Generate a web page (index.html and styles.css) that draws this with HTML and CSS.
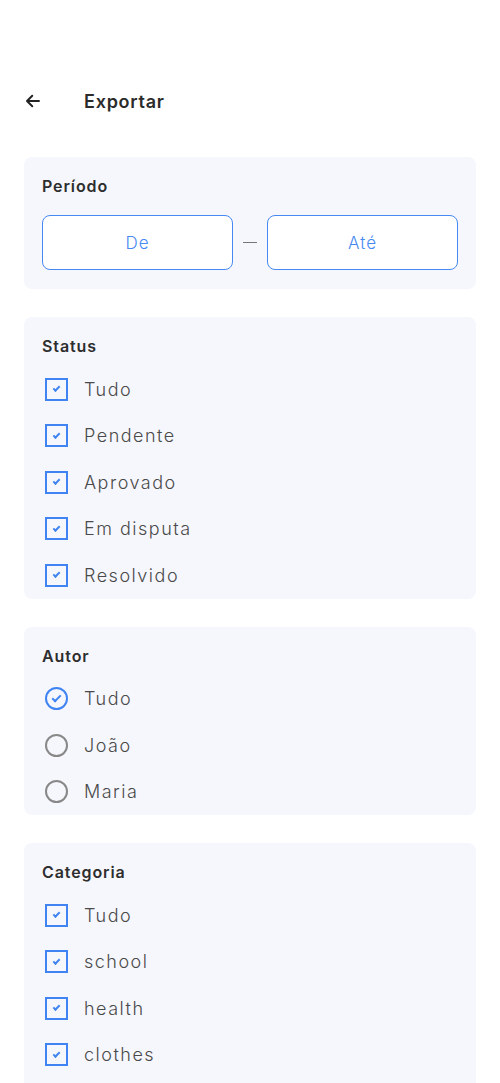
FILE: index.html
```html
<!DOCTYPE html>
<html lang="pt">

<head>
    <meta charset="UTF-8">
    <meta name="viewport" content="width=device-width, initial-scale=1.0">
    <title>Exportar</title>
    <link rel="stylesheet" href="styles.css">
</head>

<body>
    <div class="page">
        <!-- cabeçalho -->
        <header class="top-bar">
            <button class="back-btn" aria-label="Voltar">
                <svg width="18" height="18" viewBox="0 0 24 24">
                    <path d="M20 12H5M11 5l-7 7 7 7" fill="none" stroke="#222" stroke-width="2.6" stroke-linecap="round" stroke-linejoin="round"/>
                </svg>
            </button>
            <h1 class="top-title">Exportar</h1>
        </header>

        <!-- período -->
        <section class="card">
            <h2 class="card-title">Período</h2>
            <div class="period-row">
                <button class="date-btn">De</button>
                <span class="period-dash"></span>
                <button class="date-btn">Até</button>
            </div>
        </section>

        <!-- status -->
        <section class="card">
            <h2 class="card-title">Status</h2>
            <ul class="option-list">
                <li class="option"><span class="check-box"></span>Tudo</li>
                <li class="option"><span class="check-box"></span>Pendente</li>
                <li class="option"><span class="check-box"></span>Aprovado</li>
                <li class="option"><span class="check-box"></span>Em disputa</li>
                <li class="option"><span class="check-box"></span>Resolvido</li>
            </ul>
        </section>

        <!-- autor -->
        <section class="card">
            <h2 class="card-title">Autor</h2>
            <ul class="option-list">
                <li class="option"><span class="radio selected"></span>Tudo</li>
                <li class="option"><span class="radio"></span>João</li>
                <li class="option"><span class="radio"></span>Maria</li>
            </ul>
        </section>

        <!-- categoria -->
        <section class="card card-last">
            <h2 class="card-title">Categoria</h2>
            <ul class="option-list">
                <li class="option"><span class="check-box"></span>Tudo</li>
                <li class="option"><span class="check-box"></span>school</li>
                <li class="option"><span class="check-box"></span>health</li>
                <li class="option"><span class="check-box"></span>clothes</li>
            </ul>
        </section>
    </div>
</body>

</html>
```

FILE: styles.css
```css
/* global */

*,
::after,
::before {
    margin: 0;
    padding: 0;
    box-sizing: border-box;
}

body {
    background-color: #fff;
    font-family: Inter, "Open Sans", sans-serif;
    color: #333;
}

.page {
    padding: 86px 24px 28px;
    display: flex;
    flex-direction: column;
    gap: 28px;
}

/* header */

.top-bar {
    display: flex;
    align-items: center;
    height: 30px;
    margin-bottom: 13px;
}

.back-btn {
    width: 60px;
    display: flex;
    align-items: center;
    border: none;
    background: none;
    padding-left: 0;
}

.top-title {
    font-size: 18px;
    font-weight: 600;
    color: #2b2b2b;
    letter-spacing: 0.75px;
}

/* cards */

.card {
    background-color: #f6f7fd;
    border-radius: 8px;
    padding: 20px 18px 0;
}

.card-last {
    padding-bottom: 24px;
}

.card-title {
    font-size: 16px;
    font-weight: 600;
    color: #2e2e2e;
    line-height: 18px;
    letter-spacing: 0.9px;
    margin-bottom: 11px;
}

.period-row {
    display: flex;
    align-items: center;
    gap: 10px;
    padding: 9px 0 19px;
}

.date-btn {
    flex: 1;
    height: 55px;
    border: 1.5px solid #4689f2;
    border-radius: 8px;
    background-color: #fff;
    color: #4689f2;
    font-family: inherit;
    font-size: 17px;
    font-weight: 300;
    letter-spacing: 1px;
}

.period-dash {
    width: 14px;
    height: 1.5px;
    background-color: #777;
}

.option-list {
    list-style: none;
}

.option {
    display: flex;
    align-items: center;
    height: 46.5px;
    font-size: 18px;
    font-weight: 300;
    color: #4a4a4a;
    letter-spacing: 1.5px;
}

.check-box {
    width: 23px;
    height: 23px;
    margin: 0 16px 0 3px;
    border: 2px solid #3f84f2;
    display: flex;
    align-items: center;
    justify-content: center;
}

.check-box::after {
    content: "";
    width: 7px;
    height: 4px;
    border-left: 2px solid #3f84f2;
    border-bottom: 2px solid #3f84f2;
    transform: translateY(-1px) rotate(-45deg);
}

.radio {
    width: 23px;
    height: 23px;
    margin: 0 16px 0 3px;
    border: 2px solid #888;
    border-radius: 50%;
    display: flex;
    align-items: center;
    justify-content: center;
}

.radio.selected {
    border-color: #3f84f2;
}

.radio.selected::after {
    content: "";
    width: 9px;
    height: 5px;
    border-left: 2px solid #3f84f2;
    border-bottom: 2px solid #3f84f2;
    transform: translateY(-1px) rotate(-45deg);
}
```
